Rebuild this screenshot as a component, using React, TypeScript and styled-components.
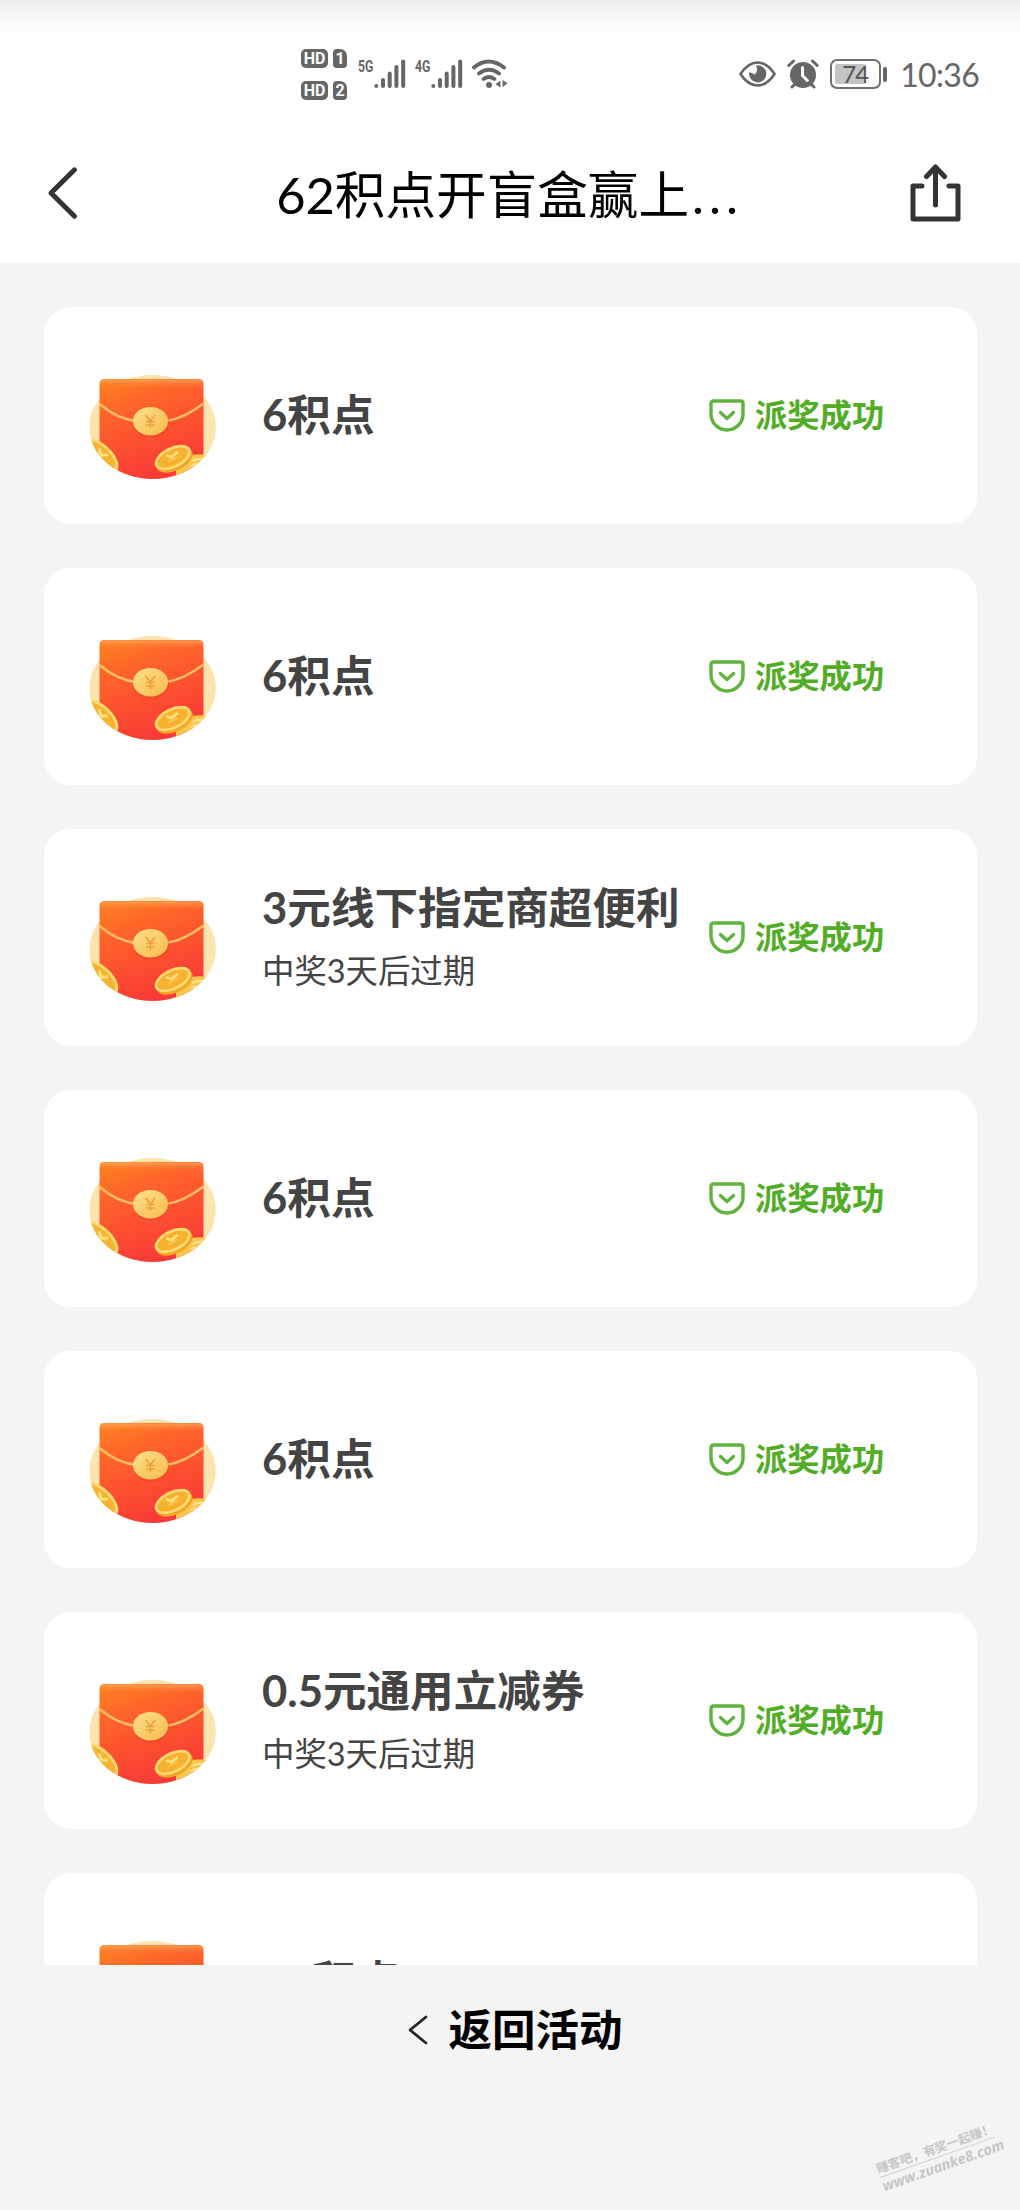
import React from "react";
import styled, { createGlobalStyle } from "styled-components";

const GlobalStyle = createGlobalStyle`
  * { box-sizing: border-box; }
  html, body { margin: 0; padding: 0; background: #f4f4f4; }
  body { font-family: "Lato", "Noto Sans CJK SC", sans-serif; }
  svg { display: block; flex: none; }
`;

const Screen = styled.div`
  position: relative;
  display: flex;
  flex-direction: column;
  width: 1020px;
  height: 2210px;
  overflow: hidden;
  background: #f4f4f4;
`;

const Top = styled.header`
  height: 263px;
  flex: none;
  background: linear-gradient(#ececec, #fbfbfb 22px, #fff 40px);
`;

const StatusBar = styled.div`
  display: flex;
  align-items: center;
  height: 148px;
  padding: 0 41px 0 301px;
  color: #666;
`;

const StatusGroup = styled.div<{ $gap: number; $push?: boolean }>`
  display: flex;
  align-items: center;
  gap: ${(p) => p.$gap}px;
  margin-left: ${(p) => (p.$push ? "auto" : "0")};
`;

const SimColumn = styled.div`
  display: flex;
  flex-direction: column;
  gap: 13px;
`;

const SimRow = styled.div`
  display: flex;
  gap: 5px;
`;

const SimTag = styled.span<{ $w: number; $cut?: boolean }>`
  width: ${(p) => p.$w}px;
  height: 19px;
  border-radius: ${(p) => (p.$cut ? "4px 7px 4px 4px" : "5px")};
  background: #666;
  color: #fff;
  font: 700 16px/19px Roboto, sans-serif;
  text-align: center;
`;

const Network = styled.div`
  display: flex;
  align-items: flex-start;
  width: 48px;
  height: 30px;
`;

const NetLabel = styled.span`
  width: 16px;
  font: 700 17px/15px Roboto, sans-serif;
  white-space: nowrap;
  transform: scaleX(0.72);
  transform-origin: left top;
`;

const Battery = styled.div`
  display: flex;
  align-items: center;
  gap: 2px;
`;

const BatteryCase = styled.div`
  width: 51px;
  height: 30px;
  padding: 3px;
  border: 2.5px solid #707070;
  border-radius: 7px;
`;

const BatteryLevel = styled.div`
  width: 31px;
  height: 100%;
  padding-left: 7px;
  border-radius: 2px;
  background: #c4c4c4;
  font: 400 24px/20px "Lato", sans-serif;
  letter-spacing: -1px;
  color: #555;
  white-space: nowrap;
`;

const BatteryNub = styled.div`
  width: 4px;
  height: 15px;
  border-radius: 2px;
  background: #666;
`;

const Clock = styled.span`
  margin: 2px 0 0 11px;
  font-size: 32px;
  line-height: 40px;
  letter-spacing: -0.7px;
`;

const NavBar = styled.nav`
  display: flex;
  align-items: center;
  justify-content: space-between;
  height: 90px;
  padding: 0 59px 0 47px;
`;

const NavTitle = styled.h1`
  margin: 0;
  padding: 3px 0 0 30px;
  font-size: 50.6px;
  font-weight: 400;
  line-height: 70px;
  color: #000;
  white-space: nowrap;
`;

const Dots = styled.span`
  margin-left: 3px;
  letter-spacing: 5px;
`;

const List = styled.main`
  display: flex;
  flex-direction: column;
  gap: 44px;
  height: 1702px;
  flex: none;
  padding: 44px 43px 0 44px;
  overflow: hidden;
`;

const Card = styled.article`
  display: flex;
  align-items: center;
  flex: none;
  height: 217px;
  padding-left: 44px;
  border-radius: 27px;
  background: #fff;
`;

const PrizeImage = styled.div`
  padding-top: 9px;
`;

const PrizeText = styled.div<{ $double?: boolean }>`
  width: 447px;
  margin-left: 44px;
  padding: ${(p) => (p.$double ? "3px 0 0" : "0 0 2px")};
`;

const PrizeName = styled.h2`
  margin: 0;
  font-size: 43.6px;
  font-weight: 700;
  line-height: 63px;
  color: #444;
  white-space: nowrap;
`;

const Expiry = styled.p`
  margin: 0;
  font-size: 32.4px;
  line-height: 63px;
  color: #444;
`;

const Result = styled.div`
  display: flex;
  align-items: center;
  gap: 10px;
  color: #50ad25;
  font-size: 32.3px;
  font-weight: 700;
  line-height: 44px;
`;

const ResultLabel = styled.span`
  padding-bottom: 2px;
`;

const Footer = styled.footer`
  display: flex;
  align-items: center;
  justify-content: center;
  gap: 21px;
  height: 130px;
  padding-left: 10px;
  color: #000;
  font-size: 43.5px;
  font-weight: 700;
`;

const FooterLabel = styled.span`
  padding-bottom: 5px;
`;

const Watermark = styled.div`
  position: absolute;
  left: 876px;
  top: 2139px;
  width: 122px;
  transform: rotate(-19.5deg);
  color: #c6c6c6;
  text-align: center;
  white-space: nowrap;
`;

const WatermarkLine = styled.div<{ $latin?: boolean }>`
  font: ${(p) =>
    p.$latin
      ? 'italic 700 14.5px/17px "Open Sans", sans-serif'
      : '700 12.4px/18px "Noto Sans CJK SC", sans-serif'};
  border-bottom: ${(p) => (p.$latin ? "0" : "1px solid #cfcfcf")};
`;

const SignalIcon = () => (
  <svg width="32" height="30" viewBox="0 0 32 30" stroke="#666" strokeWidth="4" strokeLinecap="round">
    <path d="M2.300 27v0M9 21v6M15.700 14.500v12.500M22.400 8v19M29.200 2.500v24.500" />
  </svg>
);

const WifiIcon = () => (
  <svg width="36" height="30" viewBox="0 0 36 30" fill="none" stroke="#666" strokeWidth="3.800" strokeLinecap="round">
    <path d="M2 8.500Q16.500-3.500 32 8.500M7 14.500Q17 7 27 14.500M11.500 20Q17 16 22.500 20" />
    <circle cx="17" cy="26" r="3" fill="#666" stroke="none" />
    <path d="M28.500 21.500v7l-5-3.200zM30.500 21l5 3.200-5 4z" fill="#666" stroke="none" />
  </svg>
);

const EyeIcon = () => (
  <svg width="37" height="26" viewBox="0 0 37 26" fill="none">
    <path d="M1.500 13Q9 1.500 18.500 1.500T35.500 13Q28 24.500 18.500 24.500T1.500 13Z" stroke="#666" strokeWidth="2.700" strokeLinejoin="round" />
    <path d="M17 4.500a8.600 8.600 0 1 1-6.600 6.500l5.600 2.500q3.500-4 1-9z" fill="#666" />
  </svg>
);

const AlarmIcon = () => (
  <svg width="32" height="30" viewBox="0 0 32 30" fill="none" strokeLinecap="round">
    <circle cx="16" cy="16" r="13" fill="#666" />
    <path d="M1.800 6.500 6.500 2M30.200 6.500 25.500 2M5 28l3-3M27 28l-3-3" stroke="#666" strokeWidth="3" />
    <path d="M15.500 8.500v8l4.800 5" stroke="#fff" strokeWidth="3" strokeLinejoin="round" />
  </svg>
);

const BackIcon = () => (
  <svg width="32" height="54" viewBox="0 0 32 54" fill="none" stroke="#333436" strokeWidth="5" strokeLinecap="round" strokeLinejoin="round">
    <path d="M27.500 3.800 4 27 27.500 50.200" />
  </svg>
);

const ShareIcon = () => (
  <svg width="51" height="58" viewBox="0 0 51 58" fill="none" stroke="#333436" strokeWidth="5" strokeLinecap="round" strokeLinejoin="round">
    <path d="M12 22H3v33h45V22h-9M25.500 41V3M16.500 12.500l9-9.500 9 9.500" />
  </svg>
);

const FooterArrow = () => (
  <svg width="20" height="30" viewBox="0 0 20 30" fill="none" stroke="#222" strokeWidth="2.700" strokeLinecap="round" strokeLinejoin="round">
    <path d="M18 2 2 15 18 28" />
  </svg>
);

const ShieldIcon = () => (
  <svg width="36" height="33" viewBox="0 0 36 33" fill="none" stroke="#5fb33e" strokeWidth="3.400" strokeLinecap="round" strokeLinejoin="round">
    <path d="M4.500 2h27q2.500 0 2.500 2.500V15a16 16 0 0 1-32 0V4.500Q2 2 4.500 2Z" />
    <path d="m11.500 13.500 6.500 6 6.500-6" />
  </svg>
);

const EnvelopeIcon = ({ id }: { id: string }) => (
  <svg width="130" height="130" viewBox="0 0 130 130">
    <defs>
      <linearGradient id={`${id}-red`} x1="0.1" y1="0" x2="0.5" y2="1">
        <stop offset="0" stopColor="#ff801f" />
        <stop offset="0.3" stopColor="#ff652a" />
        <stop offset="0.65" stopColor="#fc4f2f" />
        <stop offset="1" stopColor="#f93a38" />
      </linearGradient>
      <linearGradient id={`${id}-shine`} x1="0" y1="0" x2="0" y2="1">
        <stop offset="0" stopColor="#ffae62" stopOpacity="0.75" />
        <stop offset="1" stopColor="#ff7a30" stopOpacity="0" />
      </linearGradient>
      <linearGradient id={`${id}-gold`} x1="0" y1="0" x2="1" y2="1">
        <stop offset="0" stopColor="#ffe08a" />
        <stop offset="1" stopColor="#f8bb4b" />
      </linearGradient>
      <clipPath id={`${id}-clip`}>
        <path d="M0 0H130V72H127.800A63.200 52 0 0 1 1.400 72H0Z" />
      </clipPath>
    </defs>
    <ellipse cx="64.600" cy="72" rx="63.200" ry="52" fill="#fde3ae" />
    <g clipPath={`url(#${id}-clip)`}>
      <path d="M11.500 124V29q0-5 5-5h94q5 0 5 5v70l-15 25z" fill={`url(#${id}-red)`} />
      <path d="M12 33v-4q0-4.500 4.500-4.500h94q4.500 0 4.500 4.500v4z" fill={`url(#${id}-shine)`} />
      <path d="M11.500 49Q30 64.500 49 66M78 66Q96 63.500 115.500 48.500" fill="none" stroke="#f9bc65" strokeWidth="2.600" />
      <ellipse cx="63" cy="68.500" rx="18" ry="14.500" fill="#e9462a" opacity="0.55" />
      <ellipse cx="62.500" cy="66.200" rx="17.500" ry="14.300" fill={`url(#${id}-gold)`} />
      <path d="m57.500 60 4.800 6 4.800-6M58 66.500h8.600M58 70h8.600M62.300 66v7" fill="none" stroke="#ef9f40" strokeWidth="1.600" />
      <g transform="rotate(42 12 100)">
        <ellipse cx="12" cy="102.500" rx="23" ry="11.500" fill="#f4a92e" />
        <ellipse cx="12" cy="100.500" rx="23" ry="11.500" fill="#ffd96d" />
        <ellipse cx="12" cy="100.500" rx="19.500" ry="8.800" fill="#f6b332" />
        <path d="m7 95.500 6 4 5-5" fill="none" stroke="#ffe27c" strokeWidth="3" />
      </g>
      <path d="M88 113l16-13q12-2 24 2v28H88z" fill="#f9c64e" />
      <path d="M104 106q6-3 15-2M102 111q7-3 16-2" fill="none" stroke="#ffe391" strokeWidth="1.800" />
      <g transform="rotate(-26 85 103)">
        <ellipse cx="85.500" cy="105.500" rx="19.500" ry="10.500" fill="#f4a526" />
        <ellipse cx="85" cy="102.500" rx="19.500" ry="10.500" fill="#ffda70" />
        <ellipse cx="85" cy="102.500" rx="16.500" ry="7.800" fill="#f7b12f" />
        <path d="m80 97.500 4 4 8-2" fill="none" stroke="#ffe07a" strokeWidth="2.800" />
        <path d="M79 104h10" fill="none" stroke="#fbc851" strokeWidth="1.800" />
      </g>
    </g>
  </svg>
);

const prizes: { name: string; expiry?: string }[] = [
  { name: "6积点" },
  { name: "6积点" },
  { name: "3元线下指定商超便利", expiry: "中奖3天后过期" },
  { name: "6积点" },
  { name: "6积点" },
  { name: "0.5元通用立减券", expiry: "中奖3天后过期" },
  { name: "62积点" },
];

export default function App() {
  return (
    <Screen>
      <GlobalStyle />
      <Top>
        <StatusBar>
          <StatusGroup $gap={11}>
            <SimColumn>
              {[1, 2].map((n) => (
                <SimRow key={n}>
                  <SimTag $w={27}>HD</SimTag>
                  <SimTag $w={14} $cut>{n}</SimTag>
                </SimRow>
              ))}
            </SimColumn>
            <StatusGroup $gap={9}>
              {["5G", "4G"].map((label) => (
                <Network key={label}>
                  <NetLabel>{label}</NetLabel>
                  <SignalIcon />
                </Network>
              ))}
              <WifiIcon />
            </StatusGroup>
          </StatusGroup>
          <StatusGroup $gap={11} $push>
            <EyeIcon />
            <AlarmIcon />
            <Battery>
              <BatteryCase>
                <BatteryLevel>74</BatteryLevel>
              </BatteryCase>
              <BatteryNub />
              <Clock>10:36</Clock>
            </Battery>
          </StatusGroup>
        </StatusBar>
        <NavBar>
          <BackIcon />
          <NavTitle>
            62积点开盲盒赢上<Dots>...</Dots>
          </NavTitle>
          <ShareIcon />
        </NavBar>
      </Top>
      <List>
        {prizes.map((prize, i) => (
          <Card key={i}>
            <PrizeImage>
              <EnvelopeIcon id={`prize${i}`} />
            </PrizeImage>
            <PrizeText $double={!!prize.expiry}>
              <PrizeName>{prize.name}</PrizeName>
              {prize.expiry && <Expiry>{prize.expiry}</Expiry>}
            </PrizeText>
            <Result>
              <ShieldIcon />
              <ResultLabel>派奖成功</ResultLabel>
            </Result>
          </Card>
        ))}
      </List>
      <Footer>
        <FooterArrow />
        <FooterLabel>返回活动</FooterLabel>
      </Footer>
      <Watermark>
        <WatermarkLine>赚客吧，有奖一起赚！</WatermarkLine>
        <WatermarkLine $latin>www.zuanke8.com</WatermarkLine>
      </Watermark>
    </Screen>
  );
}
